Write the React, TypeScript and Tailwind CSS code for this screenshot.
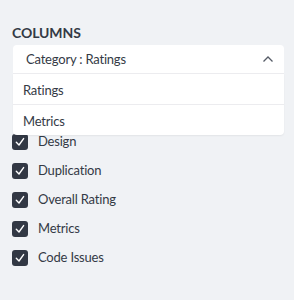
import { useState } from "react";

const COLUMNS = ["Design", "Duplication", "Overall Rating", "Metrics", "Code Issues"];

function CheckIcon() {
  return (
    <svg width="16" height="16" viewBox="0 0 16 16" className="shrink-0">
      <rect x="0" y="0" width="16" height="16" rx="3" fill="#323844" />
      <path d="M4.3 8.3 L7 11 L11.6 4.6" fill="none" stroke="white" strokeWidth="1.4" strokeLinecap="round" strokeLinejoin="round" />
    </svg>
  );
}

export default function App() {
  const [checked] = useState(COLUMNS);

  return (
    <div
      className="min-h-screen bg-[#f0f2f5] px-3 pt-[24px]"
      style={{ fontFamily: 'Lato, "Noto Sans", sans-serif' }}
    >
      <h2 className="text-[14px] font-bold leading-[18px] text-[#343a45] tracking-[-0.1px]">COLUMNS</h2>

      <div className="relative mt-[3px] ml-px mr-[-2px]">
        <div className="h-[29px] bg-white rounded-t-[4px] flex items-center justify-between pl-[13px] pr-[10px] border-b border-[#ececef]">
          <span className="text-[13px] tracking-[-0.2px] text-[#343a45] pt-[2px]">Category : Ratings</span>
          <svg width="12" height="8" viewBox="0 0 12 8">
            <path d="M1.5 6.5 L6 2 L10.5 6.5" fill="none" stroke="#555b66" strokeWidth="1.3" />
          </svg>
        </div>

        <div className="absolute left-0 right-0 top-[29px] z-10 bg-white rounded-b-[4px] shadow-[0_1px_2px_rgba(0,0,0,0.06)]">
          <div className="h-[31px] flex items-center pl-[10px] pt-[4px] text-[13px] tracking-[-0.2px] text-[#343a45] border-b border-[#ececef]">Ratings</div>
          <div className="h-[30px] flex items-center pl-[10px] pt-[4px] text-[13px] tracking-[-0.2px] text-[#343a45]">Metrics</div>
        </div>

        <ul className="pt-[60px] flex flex-col gap-[13px]">
          {checked.map((c) => (
            <li key={c} className="flex items-center h-[16px] -ml-px">
              <CheckIcon />
              <span className="ml-[10px] text-[13px] tracking-[-0.2px] text-[#343a45]">{c}</span>
            </li>
          ))}
        </ul>
      </div>
    </div>
  );
}
